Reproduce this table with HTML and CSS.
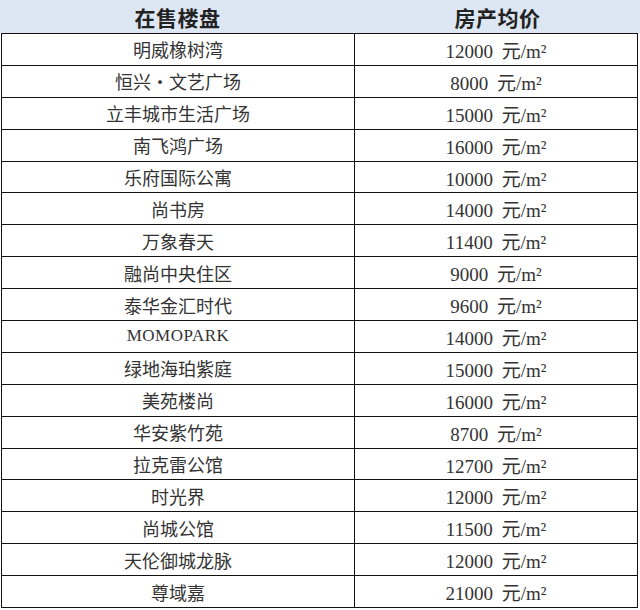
FILE: index.html
```html
<!DOCTYPE html>
<html lang="zh-CN">
<head>
<meta charset="utf-8">
<title>在售楼盘 房产均价</title>
<link rel="stylesheet" href="styles.css">
</head>
<body>
<div class="sheet">
  <div class="head">
    <div class="hcell">在售楼盘</div>
    <div class="hcell">房产均价</div>
  </div>
  <div class="rows">
    <div class="row"><div class="name">明威橡树湾</div><div class="price">12000 元/m²</div></div>
    <div class="row"><div class="name">恒兴·文艺广场</div><div class="price">8000 元/m²</div></div>
    <div class="row"><div class="name">立丰城市生活广场</div><div class="price">15000 元/m²</div></div>
    <div class="row"><div class="name">南飞鸿广场</div><div class="price">16000 元/m²</div></div>
    <div class="row"><div class="name">乐府国际公寓</div><div class="price">10000 元/m²</div></div>
    <div class="row"><div class="name">尚书房</div><div class="price">14000 元/m²</div></div>
    <div class="row"><div class="name">万象春天</div><div class="price">11400 元/m²</div></div>
    <div class="row"><div class="name">融尚中央住区</div><div class="price">9000 元/m²</div></div>
    <div class="row"><div class="name">泰华金汇时代</div><div class="price">9600 元/m²</div></div>
    <div class="row"><div class="name latin">MOMOPARK</div><div class="price">14000 元/m²</div></div>
    <div class="row"><div class="name">绿地海珀紫庭</div><div class="price">15000 元/m²</div></div>
    <div class="row"><div class="name">美苑楼尚</div><div class="price">16000 元/m²</div></div>
    <div class="row"><div class="name">华安紫竹苑</div><div class="price">8700 元/m²</div></div>
    <div class="row"><div class="name">拉克雷公馆</div><div class="price">12700 元/m²</div></div>
    <div class="row"><div class="name">时光界</div><div class="price">12000 元/m²</div></div>
    <div class="row"><div class="name">尚城公馆</div><div class="price">11500 元/m²</div></div>
    <div class="row"><div class="name">天伦御城龙脉</div><div class="price">12000 元/m²</div></div>
    <div class="row"><div class="name">尊域嘉</div><div class="price">21000 元/m²</div></div>
  </div>
</div>
</body>
</html>
```
FILE: styles.css
```css
html, body {
  margin: 0;
  padding: 0;
  background: #ffffff;
}
.sheet {
  width: 640px;
  height: 610px;
  overflow: hidden;
}
.head {
  display: grid;
  grid-template-columns: 355px 285px;
  height: 33px;
  background: #dde7f3;
}
.hcell {
  display: flex;
  align-items: center;
  justify-content: center;
  font-family: "Noto Sans CJK SC", sans-serif;
  font-weight: 700;
  font-size: 21px;
  color: #222;
  letter-spacing: 0.5px;
}
.rows {
  margin-left: 1px;
  width: 637px;
  border-top: 1px solid #111;
  border-left: 1px solid #111;
  border-right: 1px solid #111;
  box-sizing: border-box;
}
.row {
  display: grid;
  grid-template-columns: 353px 1fr;
  height: 31.9px;
  border-bottom: 1px solid #111;
  box-sizing: border-box;
}
.name {
  display: flex;
  align-items: center;
  justify-content: center;
  border-right: 1px solid #111;
  font-family: "Noto Sans CJK SC", sans-serif;
  font-size: 18px;
  color: #333;
}
.name.latin {
  font-family: "Liberation Serif", "Noto Sans CJK SC", serif;
  font-size: 17px;
  letter-spacing: 0.5px;
}
.price {
  display: flex;
  align-items: center;
  justify-content: center;
  font-family: "Liberation Serif", "Noto Sans CJK SC", serif;
  font-size: 19px;
  color: #333;
  word-spacing: 4px;
}
```
